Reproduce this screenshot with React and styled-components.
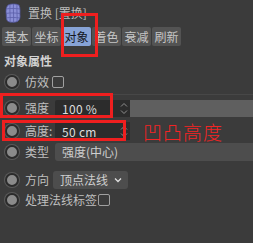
import React from "react";
import styled, { createGlobalStyle } from "styled-components";

const GlobalStyle = createGlobalStyle`
  html, body {
    margin: 0;
    padding: 0;
    background-color: #3b3b3b;
  }
  body {
    font-family: "Noto Sans CJK SC", "Liberation Sans", sans-serif;
    font-size: 12px;
    color: #c2c2c2;
  }
`;

const Panel = styled.div`
  position: relative;
  width: 253px;
  height: 243px;
  overflow: hidden;
  background-color: #3b3b3b;
`;
const Header = styled.div`
  display: flex;
  flex-direction: row;
  align-items: center;
  height: 26px;
  padding-left: 5px;
  gap: 7px;
  color: #bdbdbd;
  line-height: 1;
`;
const Tabs = styled.div`
  display: flex;
  flex-direction: row;
  gap: 1px;
  padding-left: 2px;
  margin-top: 1px;
  height: 19px;
`;
const Tab = styled.div`
  display: flex;
  align-items: center;
  justify-content: center;
  width: 29px;
  height: 19px;
  border-radius: 2px;
  background-color: ${(p) => (p.$active ? "#87a3d6" : "#535353")};
  color: ${(p) => (p.$active ? "#15171d" : "#c6c6c6")};
  line-height: 1;
`;
const SectionTitle = styled.div`
  margin-top: 6px;
  padding-left: 4px;
  height: 18px;
  line-height: 18px;
  font-weight: bold;
  color: #d2d2d2;
`;
const Row = styled.div`
  display: flex;
  flex-direction: row;
  align-items: center;
  height: ${(p) => p.$h || 20}px;
  margin-top: ${(p) => p.$mt || 0}px;
  padding-left: 5px;
`;
const Radio = styled.div`
  width: 10px;
  height: 10px;
  flex-shrink: 0;
  border-radius: 50%;
  background-color: #8b8b8b;
  border: 2px solid #2b2b2b;
  box-shadow: 0 0 0 1px #5a5a5a;
`;
const Label = styled.div`
  margin-left: 6px;
  width: ${(p) => (p.$w ? `${p.$w}px` : "auto")};
  color: #bfbfbf;
  line-height: 1;
  white-space: nowrap;
`;
const Checkbox = styled.div`
  width: 10px;
  height: 10px;
  margin-left: ${(p) => p.$ml || 2}px;
  border: 1px solid #a0a0a0;
  border-radius: 2px;
`;
const Separator = styled.div`
  height: 1px;
  margin-top: 2px;
  background-color: #474747;
`;
const NumberField = styled.div`
  display: flex;
  flex-direction: row;
  align-items: center;
  justify-content: space-between;
  width: 75px;
  height: ${(p) => p.$h || 17}px;
  box-sizing: border-box;
  padding: 0 2px 0 7px;
  background-color: #2c2c2c;
  border-radius: 2px 0 0 2px;
  color: #dedede;
  font-size: 12px;
  letter-spacing: 0.3px;
`;
const SliderTrack = styled.div`
  flex: 1;
  height: 17px;
  background-color: #5f5f5f;
`;
const Dropdown = styled.div`
  display: flex;
  flex-direction: row;
  align-items: center;
  justify-content: space-between;
  box-sizing: border-box;
  width: ${(p) => (p.$w ? `${p.$w}px` : "auto")};
  flex: ${(p) => (p.$w ? "none" : 1)};
  height: 18px;
  margin-left: ${(p) => p.$ml || 0}px;
  padding: 0 6px 0 7px;
  background-color: #4d4d4d;
  border-radius: ${(p) => (p.$w ? "3px" : "3px 0 0 3px")};
  color: #cfcfcf;
  line-height: 1;
`;
const Annotation = styled.div`
  margin-left: 13px;
  color: #f42424;
  font-size: 19px;
  font-weight: 300;
  line-height: 1;
  letter-spacing: 1px;
`;
const RedBox = styled.div`
  position: absolute;
  box-sizing: border-box;
  border: 3px solid #ef1f1f;
  pointer-events: none;
`;

const DeformerIcon = () => (
  <svg width="16" height="20" viewBox="0 0 16 20">
    <path
      d="M3 2 C6 0.5 11 0.5 14 2 C15.5 5 15 9 15 12 C15.5 15 14.5 18 11 19 C8 19.6 5 19.4 3 18.4 C1 17 1.5 14 1.2 11 C0.8 8 0.8 4.5 3 2 Z"
      fill="#8a8fd6"
      stroke="#4d508f"
      strokeWidth="0.8"
    />
    <path
      d="M5 1.5 C4.5 7 5.5 13 5 19 M8.5 1 C8 7 9 13 8.5 19.4 M12 1.3 C11.5 7 12.5 13 12 19 M1.2 6 C5 5 11 5.5 15 6 M1 10.5 C5 9.5 11 10 15 10.5 M1.4 15 C5 14 11 14.5 15 15"
      fill="none"
      stroke="#5a5ea8"
      strokeWidth="0.8"
    />
  </svg>
);

const Spinner = () => (
  <svg width="8" height="13" viewBox="0 0 8 13">
    <path d="M1 4.5 L4 1.5 L7 4.5" fill="none" stroke="#8e8e8e" strokeWidth="1" />
    <path d="M1 8.5 L4 11.5 L7 8.5" fill="none" stroke="#8e8e8e" strokeWidth="1" />
  </svg>
);

const Chevron = () => (
  <svg width="8" height="6" viewBox="0 0 8 6">
    <path d="M1 1.5 L4 4.5 L7 1.5" fill="none" stroke="#e0e0e0" strokeWidth="1.3" />
  </svg>
);

const TABS = ["基本", "坐标", "对象", "着色", "衰减", "刷新"];

const App = () => {
  return (
    <Panel>
      <GlobalStyle />
      <Header>
        <DeformerIcon />
        <span>置换 [置换]</span>
      </Header>
      <Tabs>
        {TABS.map((t) => (
          <Tab key={t} $active={t === "对象"}>
            {t}
          </Tab>
        ))}
      </Tabs>
      <SectionTitle>对象属性</SectionTitle>
      <Row $mt={2}>
        <Radio />
        <Label>仿效</Label>
        <Checkbox $ml={3} />
      </Row>
      <Separator />
      <Row $mt={3}>
        <Radio />
        <Label $w={30}>强度</Label>
        <NumberField>
          100 %
          <Spinner />
        </NumberField>
        <SliderTrack />
      </Row>
      <Row $mt={3}>
        <Radio />
        <Label $w={30}>高度:</Label>
        <NumberField $h={18}>
          50 cm
          <Spinner />
        </NumberField>
        <Annotation>凹凸高度</Annotation>
      </Row>
      <Row $mt={1}>
        <Radio />
        <Label $w={30}>类型</Label>
        <Dropdown>强度(中心)</Dropdown>
      </Row>
      <Row $mt={8}>
        <Radio />
        <Label $w={28}>方向</Label>
        <Dropdown $w={75}>
          顶点法线
          <Chevron />
        </Dropdown>
      </Row>
      <Row>
        <Radio />
        <Label>处理法线标签</Label>
        <Checkbox $ml={1} />
      </Row>
      <RedBox style={{ left: 61, top: 13, width: 37, height: 44 }} />
      <RedBox style={{ left: 0, top: 93, width: 113, height: 25 }} />
      <RedBox style={{ left: 2, top: 120, width: 124, height: 21 }} />
    </Panel>
  );
};

export default App;
